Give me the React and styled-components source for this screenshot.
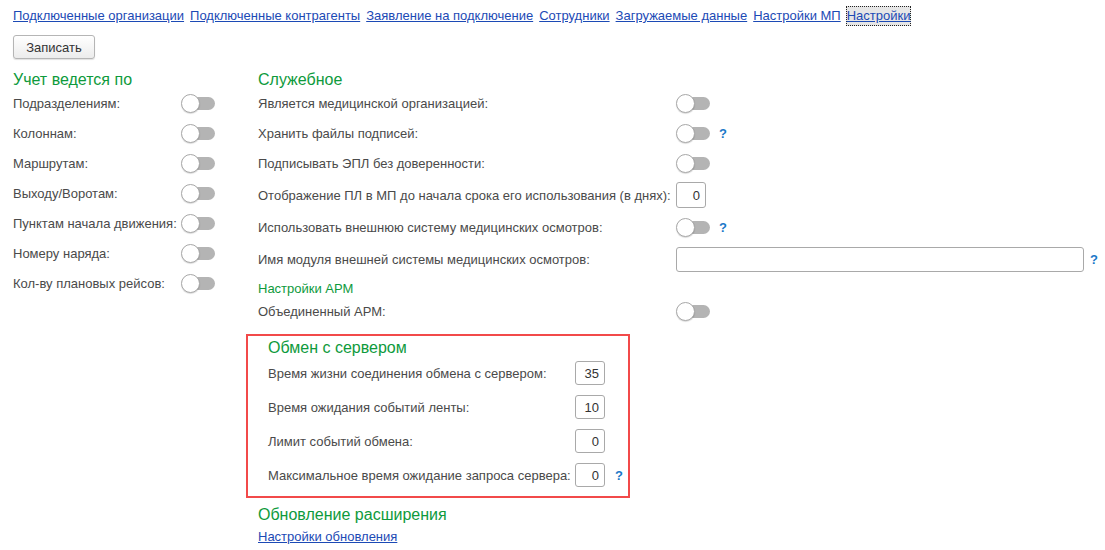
import React from "react";
import styled, { createGlobalStyle } from "styled-components";

const GlobalStyle = createGlobalStyle`
  body {
    margin: 0;
    background: #fff;
    font-family: "Liberation Sans", Arial, sans-serif;
    font-size: 13px;
    color: #4a4a4a;
    overflow: hidden;
  }
`;

const navLinks = [
  "Подключенные организации",
  "Подключенные контрагенты",
  "Заявление на подключение",
  "Сотрудники",
  "Загружаемые данные",
  "Настройки МП",
  "Настройки",
];

const accountingRows = [
  "Подразделениям:",
  "Колоннам:",
  "Маршрутам:",
  "Выходу/Воротам:",
  "Пунктам начала движения:",
  "Номеру наряда:",
  "Кол-ву плановых рейсов:",
];

const exchangeRows = [
  { label: "Время жизни соединения обмена с сервером:", value: "35" },
  { label: "Время ожидания событий ленты:", value: "10" },
  { label: "Лимит событий обмена:", value: "0" },
  { label: "Максимальное время ожидание запроса сервера:", value: "0", help: true },
];

const Page = styled.div`
  padding: 6px 13px 0;
`;

const Nav = styled.nav`
  display: flex;
  gap: 6px;
  height: 20px;
  align-items: center;
`;

const NavLink = styled.a`
  color: #1c4ab5;
  text-decoration: underline;
  line-height: 18px;
  white-space: nowrap;
  cursor: pointer;
  ${(p) =>
    p.$active &&
    `
    border: 1px dotted #222;
    background: #e6e6e6;
    margin-left: -1px;
  `}
`;

const Button = styled.button`
  margin-top: 9px;
  width: 82px;
  height: 24px;
  font-family: inherit;
  font-size: 13px;
  color: #333;
  background: linear-gradient(#ffffff, #ececec);
  border: 1px solid #b5b5b5;
  border-radius: 3px;
  box-shadow: 0 1px 1px rgba(0, 0, 0, 0.12);
  padding: 0;
`;

const Columns = styled.div`
  display: flex;
  margin-top: 12px;
`;

const LeftCol = styled.div`
  width: 245px;
  flex: none;
  display: flex;
  flex-direction: column;
`;

const RightCol = styled.div`
  flex: none;
  display: flex;
  flex-direction: column;
`;

const Header = styled.div`
  color: #0e9a3c;
  font-size: 16px;
  line-height: 18px;
  height: 17px;
  margin-top: ${(p) => p.$top || 0}px;
`;

const SubHeader = styled.div`
  color: #0e9a3c;
  font-size: 13px;
  line-height: 18px;
  margin-top: 4px;
`;

const Row = styled.div`
  display: flex;
  align-items: center;
  height: ${(p) => p.$h || 30}px;
`;

const Label = styled.div`
  width: ${(p) => p.$w}px;
  flex: none;
  white-space: nowrap;
`;

const Toggle = styled.span`
  position: relative;
  display: inline-block;
  width: 34px;
  height: 19px;
  flex: none;

  &::before {
    content: "";
    position: absolute;
    left: 6px;
    right: 0;
    top: 3px;
    height: 13px;
    border-radius: 7px;
    background: #b4b4b4;
  }

  &::after {
    content: "";
    position: absolute;
    left: 0;
    top: 0;
    width: 17px;
    height: 17px;
    border-radius: 50%;
    background: #fff;
    border: 1px solid #a8a8a8;
    box-shadow: 0 1px 1px rgba(0, 0, 0, 0.15);
  }
`;

const Help = styled.span`
  color: #1b78c8;
  font-weight: bold;
  font-size: 13px;
  margin-left: ${(p) => p.$gap || 9}px;
`;

const Input = styled.div`
  width: ${(p) => p.$w || 30}px;
  height: ${(p) => p.$h || 24}px;
  box-sizing: border-box;
  border: 1px solid #a9a9a9;
  border-radius: 3px;
  display: flex;
  align-items: center;
  justify-content: flex-end;
  padding-right: 5px;
  color: #333;
  flex: none;
`;

const ExchangeBox = styled.div`
  margin: 10px 0 0 -12px;
  width: 384px;
  box-sizing: border-box;
  border: 2px solid #f24a4a;
  padding: 3px 0 4px 20px;
`;

const BottomLink = styled.a`
  color: #1c4ab5;
  text-decoration: underline;
  line-height: 18px;
  margin-top: 5px;
  align-self: flex-start;
`;

export default function App() {
  return (
    <>
      <GlobalStyle />
      <Page>
        <Nav>
          {navLinks.map((l, i) => (
            <NavLink key={l} $active={i === navLinks.length - 1}>
              {l}
            </NavLink>
          ))}
        </Nav>
        <Button>Записать</Button>
        <Columns>
          <LeftCol>
            <Header>Учет ведется по</Header>
            {accountingRows.map((r) => (
              <Row key={r}>
                <Label $w={168}>{r}</Label>
                <Toggle />
              </Row>
            ))}
          </LeftCol>
          <RightCol>
            <Header>Служебное</Header>
            <Row>
              <Label $w={418}>Является медицинской организацией:</Label>
              <Toggle />
            </Row>
            <Row>
              <Label $w={418}>Хранить файлы подписей:</Label>
              <Toggle />
              <Help>?</Help>
            </Row>
            <Row>
              <Label $w={418}>Подписывать ЭПЛ без доверенности:</Label>
              <Toggle />
            </Row>
            <Row $h={34}>
              <Label $w={418}>
                Отображение ПЛ в МП до начала срока его использования (в днях):
              </Label>
              <Input $h={26}>0</Input>
            </Row>
            <Row>
              <Label $w={418}>Использовать внешнюю систему медицинских осмотров:</Label>
              <Toggle />
              <Help>?</Help>
            </Row>
            <Row $h={34}>
              <Label $w={418}>Имя модуля внешней системы медицинских осмотров:</Label>
              <Input $w={408} $h={25} />
              <Help $gap={6}>?</Help>
            </Row>
            <SubHeader>Настройки АРМ</SubHeader>
            <Row $h={26}>
              <Label $w={418}>Объединенный АРМ:</Label>
              <Toggle />
            </Row>
            <ExchangeBox>
              <Header>Обмен с сервером</Header>
              {exchangeRows.map((r) => (
                <Row key={r.label} $h={34}>
                  <Label $w={307}>{r.label}</Label>
                  <Input>{r.value}</Input>
                  {r.help && <Help $gap={10}>?</Help>}
                </Row>
              ))}
            </ExchangeBox>
            <Header $top={8}>Обновление расширения</Header>
            <BottomLink>Настройки обновления</BottomLink>
          </RightCol>
        </Columns>
      </Page>
    </>
  );
}
